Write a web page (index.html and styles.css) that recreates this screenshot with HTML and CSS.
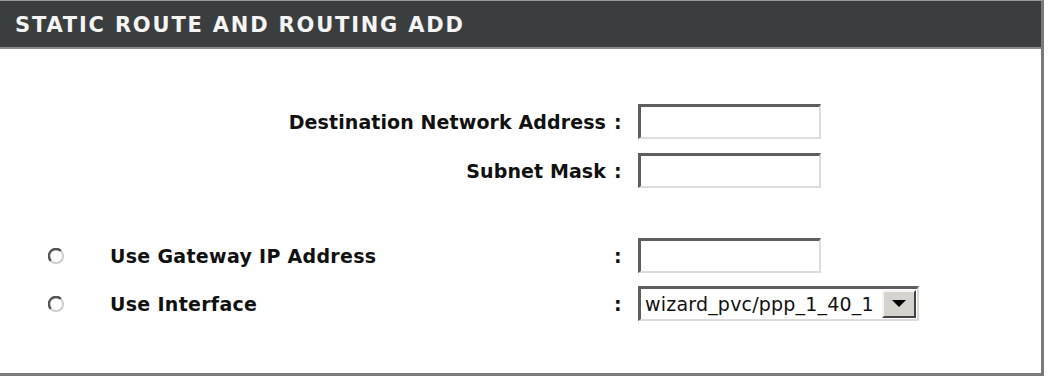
FILE: index.html
```html
<!DOCTYPE html>
<html>
<head>
<meta charset="utf-8">
<link rel="stylesheet" href="styles.css">
</head>
<body>
<div class="box">
  <div class="head">STATIC ROUTE AND ROUTING ADD</div>
  <div class="form">
    <div class="row r1">
      <div class="label right">Destination Network Address</div>
      <div class="colon">:</div>
      <div class="field"><span class="input"></span></div>
    </div>
    <div class="row r2">
      <div class="label right">Subnet Mask</div>
      <div class="colon">:</div>
      <div class="field"><span class="input"></span></div>
    </div>
    <div class="row r3">
      <div class="radio-cell"><svg class="radio" width="16" height="16" viewBox="0 0 16 16"><path d="M13 3 A7 7 0 0 0 3 13" fill="none" stroke="#555" stroke-width="2.4"/><path d="M3 13 A7 7 0 0 0 13 3" fill="none" stroke="#cfcfcf" stroke-width="2"/></svg></div>
      <div class="label">Use Gateway IP Address</div>
      <div class="colon">:</div>
      <div class="field"><span class="input"></span></div>
    </div>
    <div class="row r4">
      <div class="radio-cell"><svg class="radio" width="16" height="16" viewBox="0 0 16 16"><path d="M13 3 A7 7 0 0 0 3 13" fill="none" stroke="#555" stroke-width="2.4"/><path d="M3 13 A7 7 0 0 0 13 3" fill="none" stroke="#cfcfcf" stroke-width="2"/></svg></div>
      <div class="label">Use Interface</div>
      <div class="colon">:</div>
      <div class="field">
        <span class="select"><span class="sel-text">wizard_pvc/ppp_1_40_1</span><span class="sel-btn"><svg width="14" height="8" viewBox="0 0 14 8"><path d="M0 0 H14 L7 7 Z" fill="#000"/></svg></span></span>
      </div>
    </div>
  </div>
</div>
</body>
</html>
```
FILE: styles.css
```css
html, body { margin: 0; padding: 0; background: #fff; }
body { font-family: "DejaVu Sans", sans-serif; }
.box {
  width: 1044px;
  height: 376px;
  border-top: 1px solid #9a9a9a;
  border-right: 3px solid #7a7a7a;
  border-bottom: 3px solid #7a7a7a;
  box-sizing: border-box;
}
.head {
  height: 48px;
  box-sizing: border-box;
  padding-top: 2px;
  background: #3b3e3f;
  color: #f4f4f4;
  font-family: "DejaVu Sans", sans-serif;
  font-weight: bold;
  font-size: 21px;
  letter-spacing: 1.8px;
  line-height: 44px;
  padding-left: 15px;
  border-bottom: 2px solid #8a8a8a;
}
.form { padding-top: 55px; }
.row {
  display: grid;
  grid-template-columns: 110px 496px 32px auto;
  align-items: center;
  font-weight: bold;
  font-size: 19px;
  letter-spacing: 0.1px;
  color: #111;
}
.r1, .r2, .r3, .r4 { height: 35px; }
.r2 { margin-top: 14px; }
.r3 { margin-top: 50px; }
.r4 { margin-top: 13px; }
.label.right { grid-column: 1 / 3; text-align: right; }
.r3 .label, .r4 .label { letter-spacing: 0.3px; }
.radio-cell { padding-left: 48px; display: flex; align-items: center; }
.radio { display: block; }
.colon { padding-left: 8px; }
.input {
  display: block;
  width: 183px; height: 35px;
  box-sizing: border-box;
  border-top: 3px solid #5e5e5e;
  border-left: 3px solid #5e5e5e;
  border-right: 2px solid #dcdcdc;
  border-bottom: 2px solid #dcdcdc;
  background: #fff;
}
.select {
  display: flex;
  align-items: stretch;
  width: 281px; height: 35px;
  box-sizing: border-box;
  border-top: 3px solid #5e5e5e;
  border-left: 3px solid #5e5e5e;
  border-right: 2px solid #dcdcdc;
  border-bottom: 2px solid #dcdcdc;
  background: #fff;
}
.sel-text {
  flex: 1;
  font-weight: normal;
  font-size: 19px;
  letter-spacing: 0.2px;
  line-height: 30px;
  padding-left: 4px;
  color: #111;
  white-space: nowrap;
  overflow: hidden;
}
.sel-btn {
  width: 34px;
  flex: none;
  margin: 1px 1px 1px 0;
  background: #d6d3ce;
  border-top: 2px solid #f4f4f4;
  border-left: 2px solid #f4f4f4;
  border-right: 2px solid #444;
  border-bottom: 2px solid #444;
  box-sizing: border-box;
  display: flex;
  align-items: center;
  justify-content: center;
}
```
